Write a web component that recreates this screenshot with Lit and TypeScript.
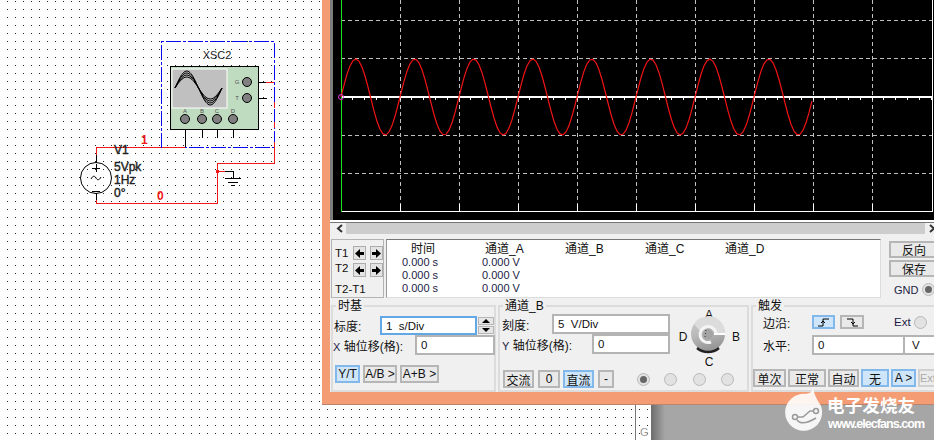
import { LitElement, html, css, svg } from "lit";
import { customElement } from "lit/decorators.js";

const FONT = css`"Liberation Sans", "Noto Sans CJK SC", sans-serif`;

function sinePoints(): string {
  const pts: string[] = [];
  for (let x = 0; x <= 471; x += 3) {
    const y = 97 - 38 * Math.sin((2 * Math.PI * x) / 59);
    pts.push(`${x + 8},${y.toFixed(1)}`);
  }
  return pts.join(" ");
}

function arrowBtn(dir: "l" | "r") {
  const d = dir === "l" ? "M1 5.5 L6 1 V4 H10 V7 H6 V10 Z" : "M10 5.5 L5 1 V4 H1 V7 H5 V10 Z";
  return html`<span class="arrow"><svg width="11" height="11" viewBox="0 0 11 11"><path d=${d} fill="#000"></path></svg></span>`;
}

function wave(a: number) {
  const pts: string[] = [];
  for (let x = 0; x <= 47; x++) {
    const y = 88 - a * Math.sin((2 * Math.PI * x) / 47);
    pts.push(`${x + 175},${y.toFixed(1)}`);
  }
  return svg`<polyline points=${pts.join(" ")} fill="none" stroke="#000" stroke-width="1"></polyline>`;
}

@customElement("app-root")
export class AppRoot extends LitElement {
  static styles = css`
    :host {
      display: block;
      position: relative;
      width: 934px;
      height: 440px;
      overflow: hidden;
      background: #fff;
      font-family: ${FONT};
      font-size: 12px;
      color: #111;
    }
    .canvas { position: absolute; left: 0; top: 0; }
    .lbl { font-family: "Liberation Sans", sans-serif; font-size: 12px; fill: #222; stroke: #222; stroke-width: 0.4px; }
    .net { font-family: "Liberation Sans", sans-serif; font-size: 12px; font-weight: 700; fill: #f01818; }
    .tiny { font-family: "Liberation Sans", sans-serif; font-size: 6px; fill: #555; }
    .window {
      position: absolute;
      left: 322px;
      top: 0;
      width: 640px;
      height: 404px;
      box-sizing: border-box;
      border-left: 8px solid #f49c74;
      border-bottom: 12px solid #f49c74;
      box-shadow: 0 1px 0 #b8846c;
      background: #f0f0f0;
      display: flex;
      flex-direction: column;
      overflow: hidden;
    }
    .screen {
      height: 220px;
      flex: none;
      background: #000;
      border-left: 3px solid #7c7c7c;
      box-sizing: border-box;
    }
    .screen svg { display: block; }
    .sep {
      height: 3px;
      flex: none;
      box-sizing: border-box;
      background: #fff;
      border-bottom: 1px solid #777;
    }
    .scroll { height: 11px; flex: none; display: flex; align-items: center; margin-left: 3px; }
    .scroll .end { width: 13px; display: flex; justify-content: center; flex: none; }
    .scroll .track { width: 579px; height: 11px; background: #cdcdcd; flex: none; }
    .readout {
      height: 59px;
      margin-top: 5px;
      flex: none;
      display: flex;
      padding-left: 1px;
    }
    .cursors {
      width: 53px;
      box-sizing: border-box;
      border: 1px solid #b4b4b4;
      padding: 6px 0 0 3px;
      display: flex;
      flex-direction: column;
      gap: 3px;
      flex: none;
    }
    .crow { display: flex; align-items: center; height: 14px; gap: 4px; }
    .crow .t { width: 15px; font-size: 11.5px; }
    .crow .t.up { padding-bottom: 4px; }
    .crow.last { margin-top: 2px; white-space: nowrap; font-size: 11.5px; }
    .arrow {
      width: 13px;
      height: 14px;
      box-sizing: border-box;
      border: 1px solid #adadad;
      background: #e4e4e4;
      display: flex;
      align-items: center;
      justify-content: center;
      flex: none;
    }
    .table {
      width: 495px;
      margin-left: 2px;
      box-sizing: border-box;
      background: #fff;
      border-top: 1px solid #777;
      border-left: 1px solid #999;
      border-right: 1px solid #ddd;
      border-bottom: 1px solid #ddd;
      padding: 2px 0 0 15px;
      flex: none;
      display: grid;
      grid-template-columns: 80px 80px 80px 80px 80px;
      grid-template-rows: 13px 13px 13px 13px;
      align-items: center;
    }
    .th { font-size: 12px; padding-left: 3px; line-height: 14px; white-space: nowrap; text-decoration: underline transparent; }
    .th.first { padding-left: 9px; }
    .td { font-size: 11px; color: #1c1c44; }
    .side { margin-left: 8px; padding-top: 2px; display: flex; flex-direction: column; gap: 2px; flex: none; }
    .side .btn { width: 60px; height: 17px; justify-content: flex-start; padding-left: 11px; font-size: 12px; }
    .gnd { display: flex; align-items: center; padding: 4px 0 0 5px; gap: 4px; font-size: 11px; color: #1c1c44; }
    .btn {
      box-sizing: border-box;
      height: 18px;
      display: flex;
      align-items: center;
      justify-content: center;
      border: 2px solid #b6b6b6;
      background: #e9e9e9;
      font-size: 12px;
      white-space: nowrap;
      flex: none;
    }
    .btn.on { border-color: #82b8ea; background: #cfe6fa; }
    .btn.off { color: #aaa; background: #ececec; border-color: #d0d0d0; justify-content: flex-start; padding-left: 0; font-size: 11px; }
    .radio {
      width: 13px;
      height: 13px;
      box-sizing: border-box;
      border-radius: 50%;
      border: 1px solid #b8b8b8;
      background: #e2e2e2;
      display: flex;
      align-items: center;
      justify-content: center;
      flex: none;
    }
    .radio.on::after { content: ""; width: 7px; height: 7px; border-radius: 50%; background: #666; }
    .groups { height: 87px; margin-top: 7px; flex: none; display: flex; gap: 2px; padding-left: 1px; }
    .group {
      position: relative;
      box-sizing: border-box;
      border: 2px solid #dcdcdc;
      flex: none;
    }
    .legend {
      position: absolute;
      top: -9px;
      left: 3px;
      background: #f0f0f0;
      padding: 0 2px;
      font-size: 12px;
      line-height: 16px;
      white-space: nowrap;
    }
    .time { width: 165px; padding-top: 9px; }
    .chan { width: 251px; }
    .trig { width: 200px; padding-top: 8px; }
    .row { display: flex; align-items: center; white-space: nowrap; }
    .label { flex: none; font-size: 12px; box-sizing: border-box; }
    .label .ax { font-size: 11px; color: #1c1c44; }
    .input {
      box-sizing: border-box;
      height: 20px;
      border: 2px solid #b4b4b4;
      background: #fff;
      display: flex;
      align-items: center;
      padding-left: 4px;
      font-size: 11.5px;
      white-space: pre;
      flex: none;
    }
    .input.focus { border-color: #62a8e6; height: 19px; }
    .spin { display: flex; flex-direction: column; gap: 1px; width: 16px; margin-left: 1px; flex: none; }
    .spin span { height: 8px; background: #e6e6e6; border: 1px solid #b6b6b6; box-sizing: border-box; display: flex; align-items: center; justify-content: center; }
    .spin svg { display: block; }
    .gap2 { gap: 3px; }
    .top { display: flex; height: 63px; }
    .col { width: 170px; padding-top: 7px; box-sizing: border-box; flex: none; }
    .knob { display: block; flex: none; }
    .knob text { font-family: "Liberation Sans", sans-serif; font-size: 12px; fill: #111; text-anchor: middle; }
    .mark { position: absolute; left: 780px; top: 380px; pointer-events: none; }
    .mark .cn { font-family: "Noto Sans CJK SC", sans-serif; font-size: 17.5px; font-weight: 700; fill: #fff; }
    .mark .en { font-family: "Liberation Sans", sans-serif; font-size: 12.5px; font-weight: 700; fill: #fff; }
  `;

  private renderCanvas() {
    const wire = "#f01818";
    return html`<svg class="canvas" width="934" height="440" viewBox="0 0 934 440">
      <defs>
        <pattern id="dots" x="7" y="1" width="8" height="8" patternUnits="userSpaceOnUse">
          <rect width="1" height="1" fill="#222"></rect>
        </pattern>
        <linearGradient id="shade" x1="0" x2="1" y1="0" y2="0">
          <stop offset="0" stop-color="#6c6c6c"></stop>
          <stop offset="1" stop-color="#a6a6a6"></stop>
        </linearGradient>
      </defs>
      <rect width="934" height="440" fill="url(#dots)"></rect>
      <rect x="635" y="404" width="1" height="36" fill="#777"></rect>
      <text x="640" y="436" font-family="Liberation Sans" font-size="11" fill="#999">G</text>
      <rect x="651" y="404" width="14" height="36" fill="url(#shade)"></rect>
      <rect x="665" y="404" width="269" height="36" fill="#a6a6a6"></rect>

      <g fill="none" shape-rendering="crispEdges">
        <path d="M96 155V147H185" stroke=${wire}></path>
        <path d="M96 155V163M96 193V200" stroke="#000"></path>
        <path d="M217 171H225" stroke=${wire}></path>
        <path d="M225 171H233V178M225 178H241M228 182H238M231 185H235" stroke="#000"></path>
        <path d="M202 138V123M217 138V123M233 138V123" stroke="#000"></path>
        <path d="M185 147V123" stroke="#000"></path>
        <path d="M251 82H266M251 98H267" stroke="#000"></path>
        <path d="M161.5 147.5V41.5H274.5V147.5H161.5" stroke="#0808f0" stroke-width="1" stroke-dasharray="15 2 3 2"></path>
        <path d="M96 200V203H217V163H274V147" stroke=${wire}></path>
        <path d="M266 82H274M274 102V108M274 122V128M274 142V147" stroke=${wire}></path>
        <path d="M185 147H161.5" stroke=${wire}></path>
      </g>
      <rect x="216" y="170" width="3" height="3" fill=${wire}></rect>

      <text x="217" y="59" text-anchor="middle" font-family="Liberation Sans" font-size="11" fill="#222">XSC2</text>
      <rect x="170.5" y="66.5" width="88" height="63" fill="#c0dcc0" stroke="#000"></rect>
      <rect x="172" y="69" width="55" height="39" fill="#c0c0c0" stroke="#fff"></rect>
      ${wave(11)}${wave(13)}${wave(15)}${wave(17)}
      ${[185, 202, 217, 233].map((x) => svg`<circle cx=${x} cy="119" r="4.5" fill="#808080" stroke="#000"></circle>`)}
      ${[["A", 185], ["B", 202], ["C", 217], ["D", 233]].map(([t, x]) => svg`<text class="tiny" x=${x} y="113" text-anchor="middle">${t}</text>`)}
      <circle cx="247" cy="82" r="4.5" fill="#808080" stroke="#000"></circle>
      <circle cx="247" cy="98" r="4.5" fill="#808080" stroke="#000"></circle>
      <text class="tiny" x="237" y="84" text-anchor="middle">G</text>
      <text class="tiny" x="237" y="100" text-anchor="middle">T</text>

      <circle cx="96" cy="178" r="15.5" fill="none" stroke="#000"></circle>
      <path d="M92 168H100M96 164V172M92 191H100" stroke="#000" fill="none" shape-rendering="crispEdges"></path>
      <path d="M91 179C93 175 95 176 96 178S99 181 101 177" stroke="#000" fill="none"></path>
      <text class="lbl" x="114" y="154">V1</text>
      <text class="lbl" x="114" y="171">5Vpk</text>
      <text class="lbl" x="114" y="184">1Hz</text>
      <text class="lbl" x="114" y="197">0°</text>
      <text class="net" x="141" y="144">1</text>
      <text class="net" x="157" y="200">0</text>
    </svg>`;
  }

  private renderScope() {
    const xs = [0, 1, 2, 3, 4, 5, 6, 7, 8, 9].map((i) => 8 + 59 * i);
    const ys = [20.5, 58.5, 135.5, 173.5];
    const ticks: number[] = [];
    for (let x = 8; x < 600; x += 11.8) ticks.push(x);
    return html`<svg width="601" height="220" viewBox="0 0 601 220">
      <g stroke="#c0c0c0" fill="none" stroke-dasharray="4 3" shape-rendering="crispEdges">
        ${xs.slice(1).map((x) => svg`<line x1=${x} x2=${x} y1="0" y2="211"></line>`)}
        ${ys.map((y) => svg`<line x1="8" x2="599" y1=${y} y2=${y}></line>`)}
      </g>
      <g stroke="#fff" fill="none" shape-rendering="crispEdges">
        ${ticks.map((x) => svg`<line x1=${x} x2=${x} y1="97" y2="100"></line>`)}
        ${xs.slice(1).map((x) => svg`<line x1=${x} x2=${x} y1="204" y2="211"></line>`)}
        <path d="M8 211.5H599.5V0" stroke-width="1.5"></path>
        <line x1="8" x2="599" y1="97" y2="97" stroke-width="2"></line>
      </g>
      <line x1="8.5" x2="8.5" y1="0" y2="212" stroke="#19e619"></line>
      <polyline points=${sinePoints()} fill="none" stroke="#f01414" stroke-width="1.2"></polyline>
      <circle cx="8" cy="97" r="2.5" fill="none" stroke="#e040e0"></circle>
    </svg>`;
  }

  private renderKnob() {
    return html`<svg class="knob" width="78" height="63" viewBox="0 0 78 63">
      <defs>
        <linearGradient id="kb" x1="0" y1="0" x2="0.3" y2="1">
          <stop offset="0" stop-color="#d0d0d0"></stop>
          <stop offset="0.55" stop-color="#b8b8b8"></stop>
          <stop offset="1" stop-color="#989898"></stop>
        </linearGradient>
      </defs>
      <text x="39" y="12">A</text>
      <text x="13" y="34">D</text>
      <text x="66" y="34">B</text>
      <text x="39" y="59">C</text>
      <circle cx="38" cy="27" r="17" fill="url(#kb)"></circle>
      <path d="M52 16A17 17 0 0 0 24 17L30 24A9 9 0 0 1 46 27H55A17 17 0 0 0 52 16Z" fill="#dcdcdc"></path>
      <path d="M46 27A8 8 0 1 0 41 35" fill="none" stroke="#f4f4f4" stroke-width="3"></path>
      <path d="M44 27H55" stroke="#fff" stroke-width="2"></path>
      <circle cx="38" cy="27" r="5" fill="#a4a4a4"></circle>
      <path d="M36 23L35 30" stroke="#333" stroke-width="1" stroke-dasharray="1 2"></path>
      <path d="M27 41A17 17 0 0 0 49 41" fill="none" stroke="#222" stroke-width="2.5"></path>
    </svg>`;
  }

  render() {
    const up = html`<svg width="8" height="4" viewBox="0 0 8 4"><path d="M4 0L8 4H0Z" fill="#000"></path></svg>`;
    const down = html`<svg width="8" height="4" viewBox="0 0 8 4"><path d="M0 0H8L4 4Z" fill="#000"></path></svg>`;
    return html`
      ${this.renderCanvas()}
      <div class="window">
        <div class="screen">${this.renderScope()}</div>
        <div class="sep"></div>
        <div class="scroll">
          <span class="end"><svg width="8" height="9" viewBox="0 0 8 9"><path d="M6 1L2 4.5L6 8" fill="none" stroke="#333" stroke-width="2"></path></svg></span>
          <span class="track"></span>
          <span class="end"><svg width="8" height="9" viewBox="0 0 8 9"><path d="M2 1L6 4.5L2 8" fill="none" stroke="#333" stroke-width="2"></path></svg></span>
        </div>
        <div class="readout">
          <div class="cursors">
            <div class="crow"><span class="t">T1</span>${arrowBtn("l")}${arrowBtn("r")}</div>
            <div class="crow"><span class="t up">T2</span>${arrowBtn("l")}${arrowBtn("r")}</div>
            <div class="crow last">T2-T1</div>
          </div>
          <div class="table">
            <span class="th first">时间</span><span class="th">通道_A</span><span class="th">通道_B</span><span class="th">通道_C</span><span class="th">通道_D</span>
            <span class="td">0.000 s</span><span class="td">0.000 V</span><span></span><span></span><span></span>
            <span class="td">0.000 s</span><span class="td">0.000 V</span><span></span><span></span><span></span>
            <span class="td">0.000 s</span><span class="td">0.000 V</span><span></span><span></span><span></span>
          </div>
          <div class="side">
            <div class="btn">反向</div>
            <div class="btn">保存</div>
            <div class="gnd">GND <span class="radio on"></span></div>
          </div>
        </div>
        <div class="groups">
          <div class="group time">
            <span class="legend">时基</span>
            <div class="row">
              <span class="label" style="width:47px;padding-left:1px">标度:</span>
              <span class="input focus" style="width:97px">1  s/Div</span>
              <span class="spin"><span>${up}</span><span>${down}</span></span>
            </div>
            <div class="row">
              <span class="label" style="width:82px"><span class="ax">X</span> 轴位移(格):</span>
              <span class="input" style="width:80px">0</span>
            </div>
            <div class="row gap2" style="margin:10px 0 0 2px">
              <span class="btn on" style="width:25px">Y/T</span>
              <span class="btn" style="width:34px">A/B &gt;</span>
              <span class="btn" style="width:39px">A+B &gt;</span>
            </div>
          </div>
          <div class="group chan">
            <span class="legend">通道_B</span>
            <div class="top">
              <div class="col">
                <div class="row">
                  <span class="label" style="width:52px;padding-left:2px">刻度:</span>
                  <span class="input" style="width:118px">5  V/Div</span>
                </div>
                <div class="row">
                  <span class="label" style="width:92px;padding-left:2px"><span class="ax">Y</span> 轴位移(格):</span>
                  <span class="input" style="width:78px">0</span>
                </div>
              </div>
              ${this.renderKnob()}
            </div>
            <div class="row" style="margin-left:3px">
              <span class="btn" style="width:31px">交流</span>
              <span class="btn" style="width:22px;margin-left:4px">0</span>
              <span class="btn on" style="width:31px;margin-left:3px">直流</span>
              <span class="btn" style="width:16px;margin-left:4px">-</span>
              <span class="radio on" style="margin-left:23px"></span>
              <span class="radio" style="margin-left:14px"></span>
              <span class="radio" style="margin-left:16px"></span>
              <span class="radio" style="margin-left:15px"></span>
            </div>
          </div>
          <div class="group trig">
            <span class="legend">触发</span>
            <div class="row" style="height:14px">
              <span class="label" style="width:59px;padding-left:10px">边沿:</span>
              <span class="btn on" style="width:23px;height:14px"><svg width="13" height="9" viewBox="0 0 13 9"><path d="M1 8H6V1H12M4 5L6 3L8 5" fill="none" stroke="#000"></path></svg></span>
              <span class="btn" style="width:24px;height:14px;margin-left:5px"><svg width="13" height="9" viewBox="0 0 13 9"><path d="M1 1H7V8H12M5 4L7 6L9 4" fill="none" stroke="#000"></path></svg></span>
              <span style="margin-left:30px;font-size:11.5px;color:#1c1c44">Ext</span>
              <span class="radio" style="margin-left:3px"></span>
            </div>
            <div class="row" style="margin-top:6px">
              <span class="label" style="width:59px;padding-left:10px">水平:</span>
              <span class="input" style="width:93px">0</span>
              <span class="input" style="width:34px;border-left:0;padding-left:7px">V</span>
            </div>
            <div class="row" style="margin-top:14px;gap:2px">
              <span class="btn" style="width:33px">单次</span>
              <span class="btn" style="width:38px">正常</span>
              <span class="btn" style="width:31px">自动</span>
              <span class="btn on" style="width:28px">无</span>
              <span class="btn on" style="width:25px">A &gt;</span>
              <span class="btn off" style="width:28px">Ext</span>
            </div>
          </div>
        </div>
      </div>
      <svg class="mark" width="154" height="60" viewBox="0 0 154 60">
        <path d="M33 8C34 14 37 20 41 26A18.5 18.5 0 1 1 26 14C30 13 32 12 33 8Z" fill="#fff" fill-opacity="0.9"></path>
        <g fill="none" stroke="#9a9a9a" stroke-width="1.5">
          <circle cx="15" cy="37" r="2.5"></circle>
          <circle cx="36" cy="31" r="2.5"></circle>
          <path d="M18 37H23L30 31H33.5M17 40C20 44 26 44 36 38"></path>
        </g>
        <text class="cn" x="47" y="32" textLength="88">电子发烧友</text>
        <text class="en" x="48" y="48" textLength="97">www.elecfans.com</text>
      </svg>
    `;
  }
}
